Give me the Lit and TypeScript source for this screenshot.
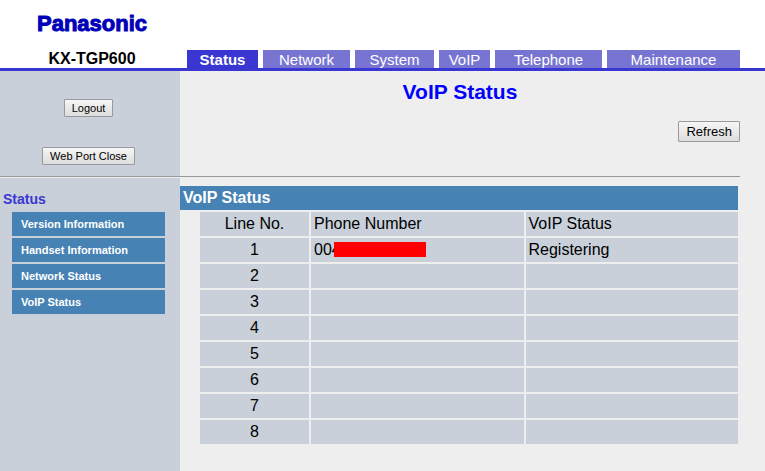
import { LitElement, html, css } from "lit";
import { customElement, property } from "lit/decorators.js";

const TABS = ["Status", "Network", "System", "VoIP", "Telephone", "Maintenance"];
const MENU = ["Version Information", "Handset Information", "Network Status", "VoIP Status"];

@customElement("app-header")
class AppHeader extends LitElement {
  static styles = css`
    :host {
      display: grid;
      grid-template-columns: 187px 1fr;
      align-items: end;
      height: 68px;
      padding-right: 25px;
      background: #fff;
      border-bottom: 3px solid #3936d2;
    }
    .brand {
      display: flex;
      flex-direction: column;
      width: 184px;
      text-align: center;
      font-weight: bold;
    }
    .logo {
      font-size: 22px;
      line-height: 24px;
      margin-bottom: 14px;
      color: #0000b8;
      -webkit-text-stroke: 1px #0000b8;
    }
    .model {
      font-size: 16px;
      line-height: 18px;
    }
    .tabs {
      display: grid;
      grid-template-columns: 71fr 87fr 79fr 51fr 107fr 133fr;
      column-gap: 5px;
    }
    .tab {
      background: #7875d2;
      color: #fff;
      font-size: 15px;
      line-height: 18px;
      height: 18px;
      padding-top: 1px;
      box-sizing: border-box;
      text-align: center;
      text-decoration: none;
    }
    .tab.active {
      background: #3936d2;
      font-weight: bold;
    }
  `;
  render() {
    return html`
      <div class="brand">
        <span class="logo">Panasonic</span>
        <span class="model">KX-TGP600</span>
      </div>
      <nav class="tabs">
        ${TABS.map((t, i) => html`<a class="tab ${i === 0 ? "active" : ""}" href="#">${t}</a>`)}
      </nav>
    `;
  }
}

const buttonStyles = css`
  button {
    box-sizing: border-box;
    margin: 0;
    padding: 0 7px;
    border: 1px solid #999;
    border-radius: 1px;
    background: linear-gradient(#f6f6f6, #dddddd);
    color: #000;
    font-family: inherit;
  }
`;

@customElement("side-bar")
class SideBar extends LitElement {
  static styles = [
    buttonStyles,
    css`
      :host {
        display: block;
        background: #c9d0da;
      }
      .actions {
        display: flex;
        flex-direction: column;
        align-items: center;
        gap: 30px;
        height: 105px;
        box-sizing: border-box;
        padding: 28px 3px 0 0;
      }
      button {
        height: 18px;
        font-size: 11px;
        line-height: 16px;
      }
      hr {
        margin: 0;
        border: 0;
        border-top: 1px solid #999;
        border-bottom: 1px solid #eee;
      }
      h2 {
        margin: 0;
        padding: 12px 3px 4px;
        font-size: 14px;
        line-height: 18px;
        color: #3936d2;
      }
      .menu {
        display: grid;
        gap: 2px;
        margin: 0 15px 0 12px;
      }
      .menu a {
        padding-left: 9px;
        background: #4682b4;
        color: #fff;
        font-size: 11px;
        font-weight: bold;
        line-height: 24px;
        text-decoration: none;
      }
    `,
  ];
  render() {
    return html`
      <div class="actions">
        <button type="button">Logout</button>
        <button type="button">Web Port Close</button>
      </div>
      <hr />
      <h2>Status</h2>
      <nav class="menu">${MENU.map((m) => html`<a href="#">${m}</a>`)}</nav>
    `;
  }
}

@customElement("voip-status")
class VoipStatus extends LitElement {
  static styles = [
    buttonStyles,
    css`
      :host {
        display: block;
        padding-right: 25px;
      }
      .top {
        height: 105px;
        box-sizing: border-box;
        padding-top: 9px;
        display: flex;
        flex-direction: column;
        align-items: center;
        gap: 17px;
      }
      h1 {
        margin: 0;
        font-size: 21px;
        line-height: 24px;
        color: #00f;
      }
      button {
        align-self: flex-end;
        height: 21px;
        font-size: 13px;
        line-height: 19px;
      }
      hr {
        margin: 0 0 9px;
        border: 0;
        border-top: 1px solid #999;
      }
      h2 {
        margin: 0 2px 0 0;
        padding-left: 3px;
        background: #4682b4;
        color: #fff;
        font-size: 16px;
        line-height: 24px;
      }
      table {
        width: calc(100% - 18px);
        margin-left: 18px;
        border-spacing: 2px;
        table-layout: fixed;
      }
      .line {
        width: 109px;
        text-align: center;
      }
      th,
      td {
        height: 24px;
        padding: 0 3px;
        box-sizing: border-box;
        background: #c9d0da;
        font-size: 16px;
        font-weight: normal;
        line-height: 24px;
        text-align: left;
      }
      th.line,
      td.line {
        text-align: center;
      }
      .number {
        position: relative;
        display: block;
      }
      .mask {
        position: absolute;
        left: 20px;
        top: 4px;
        width: 92px;
        height: 15px;
        background: #f00;
      }
    `,
  ];
  render() {
    return html`
      <div class="top">
        <h1>VoIP Status</h1>
        <button type="button">Refresh</button>
      </div>
      <hr />
      <h2>VoIP Status</h2>
      <table>
        <thead>
          <tr>
            <th class="line" scope="col">Line No.</th>
            <th scope="col">Phone Number</th>
            <th scope="col">VoIP Status</th>
          </tr>
        </thead>
        <tbody>
          ${[1, 2, 3, 4, 5, 6, 7, 8].map(
            (n) => html`<tr>
              <td class="line">${n}</td>
              <td>${n === 1 ? html`<span class="number">004<span class="mask"></span></span>` : ""}</td>
              <td>${n === 1 ? "Registering" : ""}</td>
            </tr>`
          )}
        </tbody>
      </table>
    `;
  }
}

@customElement("app-root")
class AppRoot extends LitElement {
  static styles = css`
    :host {
      display: flex;
      flex-direction: column;
      min-height: 100vh;
      background: #eee;
      color: #000;
      font-family: "Liberation Sans", Arial, sans-serif;
    }
    .body {
      flex: 1;
      display: grid;
      grid-template-columns: 180px 1fr;
    }
  `;
  render() {
    return html`
      <app-header></app-header>
      <div class="body">
        <side-bar></side-bar>
        <voip-status></voip-status>
      </div>
    `;
  }
}
